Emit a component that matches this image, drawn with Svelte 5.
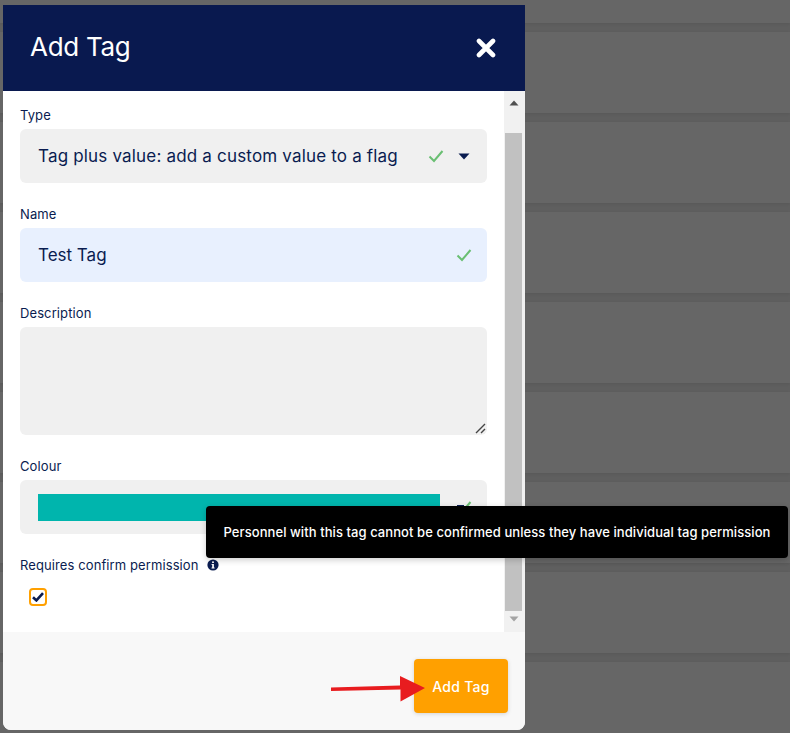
<script>
  const rows = [0, 1, 2, 3, 4, 5, 6, 7, 8];
</script>

<div class="page">
  <div class="backdrop">
    {#each rows as r (r)}
      <div class="bg-row"></div>
    {/each}
  </div>

  <div class="modal">
    <header class="head">
      <h1>Add Tag</h1>
      <svg class="close" viewBox="0 0 20 20" width="20" height="20" aria-hidden="true">
        <path d="M3 3 17 17M17 3 3 17" stroke="#fff" stroke-width="4.6" stroke-linecap="round" fill="none" />
      </svg>
    </header>

    <div class="body">
      <div class="content">
        <div class="group">
          <div class="label">Type</div>
          <div class="field grey">
            <span class="value wide">Tag plus value: add a custom value to a flag</span>
            <svg class="tick" viewBox="0 0 16 14" width="16" height="14" aria-hidden="true"><path d="M1.5 7.5 6 12 14.5 2" stroke="#6abf73" stroke-width="2" fill="none" /></svg>
            <svg class="caret" viewBox="0 0 12 7" width="12" height="7" aria-hidden="true"><path d="M0.5 0.5H11.5L6 6.5Z" fill="#0a1c50" /></svg>
          </div>
        </div>

        <div class="group">
          <div class="label">Name</div>
          <div class="field blue">
            <span class="value">Test Tag</span>
            <svg class="tick end" viewBox="0 0 16 14" width="16" height="14" aria-hidden="true"><path d="M1.5 7.5 6 12 14.5 2" stroke="#6abf73" stroke-width="2" fill="none" /></svg>
          </div>
        </div>

        <div class="group">
          <div class="label">Description</div>
          <div class="field grey area">
            <svg class="grip" viewBox="0 0 11 11" width="11" height="11" aria-hidden="true"><path d="M1 10 10 1M6 10 10 6" stroke="#444" stroke-width="1.4" fill="none" /></svg>
          </div>
        </div>

        <div class="group">
          <div class="label">Colour</div>
          <div class="field grey">
            <span class="swatch"></span>
            <span class="tick-wrap">
              <span class="tick-under"></span>
              <svg class="tick solo" viewBox="0 0 16 14" width="16" height="14" aria-hidden="true"><path d="M1.5 7.5 6 12 14.5 2" stroke="#6abf73" stroke-width="2" fill="none" /></svg>
            </span>
          </div>
        </div>

        <div class="group last">
          <div class="label with-icon">
            Requires confirm permission
            <svg viewBox="0 0 12 12" width="12" height="12" aria-hidden="true">
              <circle cx="6" cy="6" r="5.6" fill="#0a1c50" />
              <rect x="5.1" y="2.4" width="1.8" height="1.6" fill="#fff" />
              <path d="M4.6 5H6.9V8.5H7.6V9.5H4.5V8.5H5.2V6H4.6Z" fill="#fff" />
            </svg>
          </div>
          <div class="check">
            <svg viewBox="0 0 12 10" width="12" height="10" aria-hidden="true"><path d="M1 5.2 4.4 8.4 11 1.2" stroke="#0a1c50" stroke-width="2.6" fill="none" /></svg>
          </div>
        </div>
      </div>

      <div class="scrollbar">
        <svg class="arrow-up" viewBox="0 0 10 6" width="10" height="6" aria-hidden="true"><path d="M0.5 5.5H9.5L5 0.5Z" fill="#505050" /></svg>
        <div class="thumb"></div>
        <svg class="arrow-down" viewBox="0 0 10 6" width="10" height="6" aria-hidden="true"><path d="M0.5 0.5H9.5L5 5.5Z" fill="#a3a3a3" /></svg>
      </div>
    </div>

    <footer class="foot">
      <button type="button">Add Tag</button>
    </footer>
  </div>

  <div class="tooltip">Personnel with this tag cannot be confirmed unless they have individual tag permission</div>

  <svg class="red-arrow" viewBox="0 0 96 28" width="96" height="28" aria-hidden="true">
    <path d="M0 12.5 69 10.5V1L94 13 69.5 26.5V14.5L0 16Z" fill="#e81c1f" />
  </svg>
</div>

<style>
  :global(body) {
    margin: 0;
    background: #5f5f5f;
  }

  .page {
    position: relative;
    width: 790px;
    height: 733px;
    overflow: hidden;
    font-family: Inter, "Liberation Sans", sans-serif;
    color: #0a1c50;
  }

  .backdrop {
    display: flex;
    flex-direction: column;
    gap: 9px;
    margin-top: -58px;
  }

  .bg-row {
    height: 81px;
    flex: none;
    background: #666;
    box-shadow: 0 1px 3px rgba(0, 0, 0, 0.08);
  }

  .modal {
    position: absolute;
    left: 3px;
    top: 5px;
    width: 522px;
    height: 725px;
    display: flex;
    flex-direction: column;
    background: #fff;
    border-radius: 0 0 8px 8px;
    overflow: hidden;
  }

  .head {
    height: 86px;
    flex: none;
    display: flex;
    align-items: center;
    justify-content: space-between;
    padding: 0 28px 0 27px;
    background: #09194f;
    color: #fff;
  }

  h1 {
    margin: 0 0 3px;
    font-size: 26px;
    font-weight: 400;
    letter-spacing: -0.3px;
  }

  .close {
    margin-right: 1px;
  }

  .body {
    flex: 1;
    display: flex;
    min-height: 0;
  }

  .content {
    flex: 1;
    padding: 15px 17px 0;
  }

  .group {
    margin-bottom: 22px;
  }

  .group.last {
    margin-bottom: 0;
  }

  .label {
    height: 18px;
    margin-bottom: 5px;
    font-size: 13px;
    line-height: 18px;
    letter-spacing: 0.1px;
    color: #0a1c50;
  }

  .with-icon {
    display: flex;
    align-items: center;
    gap: 8px;
  }

  .field {
    display: flex;
    align-items: center;
    height: 54px;
    width: 467px;
    padding: 0 18px;
    box-sizing: border-box;
    border-radius: 6px;
    font-size: 17px;
  }

  .grey {
    background: #f0f0f0;
  }

  .blue {
    background: #e8f0fe;
  }

  .area {
    position: relative;
    height: 108px;
  }

  .value {
    flex: 1;
    white-space: nowrap;
  }

  .wide {
    letter-spacing: 0.18px;
  }

  .tick {
    flex: none;
    margin-right: 14px;
  }

  .tick.end {
    margin-left: auto;
    margin-right: -3px;
  }

  .caret {
    flex: none;
    margin-right: -1px;
  }

  .grip {
    position: absolute;
    right: 1px;
    bottom: 1px;
  }

  .swatch {
    width: 402px;
    height: 27px;
    flex: none;
    background: #00b5ad;
  }

  .tick-wrap {
    position: relative;
    display: flex;
    margin-left: auto;
    margin-right: -3px;
  }

  .tick.solo {
    position: relative;
    margin-right: 0;
  }

  .tick-under {
    position: absolute;
    left: 1px;
    top: 5px;
    width: 7px;
    height: 3px;
    background: #0a1c50;
  }

  .check {
    display: flex;
    align-items: center;
    justify-content: center;
    box-sizing: border-box;
    width: 18px;
    height: 18px;
    margin: 14px 0 0 9px;
    border: 2px solid #ffa000;
    border-radius: 4px;
    background: #fff;
  }

  .scrollbar {
    position: relative;
    flex: none;
    width: 21px;
    display: flex;
    flex-direction: column;
    align-items: center;
    background: #f1f1f1;
  }

  .arrow-up {
    margin: 9px 0 0 -2px;
  }

  .thumb {
    width: 17px;
    height: 478px;
    margin: 27px 2px 0 0;
    background: #c1c1c1;
  }

  .arrow-down {
    margin: 5px 0 0 -2px;
  }

  .foot {
    height: 98px;
    flex: none;
    box-sizing: border-box;
    display: flex;
    justify-content: flex-end;
    padding: 27px 17px 0 0;
    background: #f8f8f8;
  }

  button {
    width: 94px;
    height: 54px;
    border: 0;
    border-radius: 4px;
    background: #ffa000;
    color: #fff;
    font: 500 14px Inter, "Liberation Sans", sans-serif;
    letter-spacing: 0.3px;
    box-shadow: 0 1px 4px rgba(0, 0, 0, 0.15);
  }

  .tooltip {
    position: absolute;
    left: 206px;
    top: 506px;
    width: 582px;
    height: 52px;
    display: flex;
    align-items: center;
    justify-content: center;
    background: #000;
    border-radius: 4px;
    color: #fff;
    font-size: 13px;
    font-weight: 500;
    letter-spacing: 0.07px;
    white-space: nowrap;
    box-shadow: 0 2px 6px rgba(0, 0, 0, 0.2);
  }

  .red-arrow {
    position: absolute;
    left: 331px;
    top: 675px;
  }
</style>
